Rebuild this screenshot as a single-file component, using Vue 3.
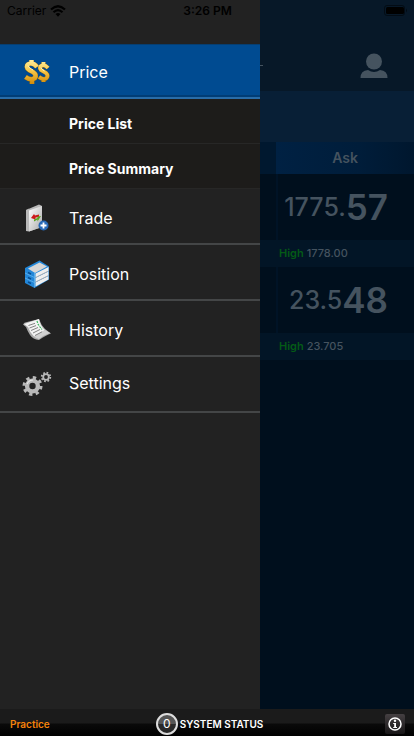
<template>
  <div class="app">
    <!-- status bar lies over both the menu and the page -->
    <header class="status-bar">
      <div class="status-left">
        <span>Carrier</span>
        <svg class="wifi" width="16" height="12" viewBox="0 0 16 12">
          <path d="M1 4.5Q8-2 15 4.5" fill="none" stroke="#000" stroke-width="2.2" />
          <path d="M3.5 7.3Q8 3 12.500 7.300" fill="none" stroke="#000" stroke-width="2.2" />
          <path d="M5.500 9Q8 7 10.500 9L8 11.700Z" fill="#000" />
        </svg>
      </div>
      <span class="clock">3:26 PM</span>
      <div class="status-right">
        <svg width="24" height="11" viewBox="0 0 24 11">
          <rect x="0.500" y="0.500" width="20" height="10" rx="2.500" fill="none" stroke="#030c15" />
          <rect x="2" y="2" width="18" height="7" rx="1.500" fill="#000" />
          <path d="M22 3.500Q24 5.500 22 7.500Z" fill="#030c15" />
        </svg>
      </div>
    </header>

    <div class="body">
      <nav class="menu">
        <button class="menu-item active" type="button">
          <svg class="icon" width="30" height="30" viewBox="0 0 30 30">
            <defs>
              <linearGradient id="gold" gradientUnits="userSpaceOnUse" x1="0" y1="3" x2="0" y2="27">
                <stop offset="0" stop-color="#fff0a0" />
                <stop offset="0.450" stop-color="#f6c84a" />
                <stop offset="1" stop-color="#d08a08" />
              </linearGradient>
            </defs>
            <g fill="none" stroke-linejoin="round">
              <path d="M9.500 3V6M15 10Q12 6 8 6.500Q3.500 7.500 5.500 11.500Q7 13.500 11 15Q15 17.500 13 21Q9 24 3.500 20M10 21.500V27" stroke="#a06a0a" stroke-width="4.800" />
              <path d="M21.500 5V8M26 11Q23 7.500 20 8.500Q16.500 10 19 13L24 16Q27 19 24 21.500Q21 23 17 20M21.500 22V25" stroke="#a06a0a" stroke-width="4.200" />
              <path d="M9.500 3V6M15 10Q12 6 8 6.500Q3.500 7.500 5.500 11.500Q7 13.500 11 15Q15 17.500 13 21Q9 24 3.500 20M10 21.500V27" stroke="url(#gold)" stroke-width="4.200" />
              <path d="M21.500 5V8M26 11Q23 7.500 20 8.500Q16.500 10 19 13L24 16Q27 19 24 21.500Q21 23 17 20M21.500 22V25" stroke="url(#gold)" stroke-width="3.600" />
              <path d="M6 8.500Q7 11 11 13M19 10.500Q19 12 22.500 14" stroke="#fff4b8" stroke-width="1" />
            </g>
          </svg>
          <span>Price</span>
        </button>

        <div class="submenu">
          <button v-for="name in subItems" :key="name" class="sub-item" type="button">{{ name }}</button>
        </div>

        <button v-for="item in items" :key="item" class="menu-item" :class="item.toLowerCase()" type="button">
          <svg v-if="item === 'Trade'" class="icon" width="30" height="30" viewBox="0 0 30 30">
            <defs>
              <linearGradient id="door" x1="0" y1="0" x2="1" y2="1">
                <stop offset="0" stop-color="#fff" />
                <stop offset="1" stop-color="#aaa" />
              </linearGradient>
            </defs>
            <path d="M4 7L7 5.500V26.500L4 28Z" fill="#8d8d8d" />
            <path d="M4 7L17 1.500L20 3V24L7 28.500L4 28Z" fill="#b9b9b9" />
            <path d="M7 7.500L20 3V24L7 28.500Z" fill="url(#door)" />
            <path d="M9 15L12 11L13 12.500L17 11.500V14L13.500 14.500L13.500 16.500Z" fill="#cd1818" />
            <path d="M19 13L15.500 18.500V16.500L12 18.500V16.500L15.500 15V13.500Z" fill="#58a51e" />
            <circle cx="21.500" cy="22.500" r="5" fill="#2869b6" />
            <path d="M18.500 22.500H24.500M21.500 19.500V25.500" stroke="#fff" stroke-width="1.800" />
          </svg>
          <svg v-else-if="item === 'Position'" class="icon" width="30" height="30" viewBox="0 0 30 30">
            <path d="M3 9L17.500 1.500L27 7.500V20.500L12.500 29L3 24Z" fill="#2387d8" />
            <path d="M6 9.500L17.500 3.500L25 7.500L13 14Z" fill="#d7d7d7" />
            <path d="M13.500 14.500L26.500 8V12L13.500 18.500ZM13.500 19L26.500 12.500V16.500L13.500 23ZM13.500 23.500L26.500 17V20.500L13.500 27.500Z" fill="#efefef" />
            <path d="M13.500 18.500L26.500 12M13.500 23L26.500 16.500" stroke="#a8adb2" stroke-width="0.900" />
            <path d="M3 14L12.500 18.500M3 19L12.500 23.500M12.500 13.500V28.500" fill="none" stroke="#65b6ef" stroke-width="0.800" />
            <path d="M6 13.500L9 15M6 18.500L9 20M6 23L9 24.500" stroke="#084d91" stroke-width="1.400" />
          </svg>
          <svg v-else-if="item === 'History'" class="icon" width="30" height="30" viewBox="0 0 30 30">
            <path d="M1 9.500Q2 7 5 7L17 4Q19 10 23 14L29 18.500Q24 20 17 25Q11 24.500 8 20Q5 15 4 12Z" fill="#aaa" />
            <path d="M2 9L17 4Q18 11 23 15L12 21.500Q8 18 6 12Z" fill="#f3f3f3" />
            <path d="M12 21.500L23 15L28 18Q22 20 17 24Q14 23 12 21.500Z" fill="#d2d2d2" />
            <path d="M6.500 10.500L13 8.300M7.500 13L14 10.600M9 15.500L16 12.500M11 18L18 14.500M13 20.500L20 16.800" stroke="#777" stroke-width="0.900" />
            <path d="M15 6L16 9L18 12L20 14.500" fill="none" stroke="#34b85a" stroke-width="1.200" stroke-dasharray="2 1" />
          </svg>
          <svg v-else class="icon" width="30" height="30" viewBox="0 0 30 30">
            <g fill="none" stroke="#b9b9b9">
              <circle cx="10.500" cy="18" r="5.400" stroke-width="4.400" />
              <circle cx="10.500" cy="18" r="8.500" stroke-width="3" stroke-dasharray="3.340" />
              <circle cx="24" cy="9" r="2.800" stroke-width="1.800" />
              <circle cx="24" cy="9" r="4.300" stroke-width="1.800" stroke-dasharray="1.690" />
            </g>
            <path d="M5 16Q7 12 11 12" fill="none" stroke="#e6e6e6" stroke-width="1.200" />
          </svg>
          <span>{{ item }}</span>
        </button>
      </nav>

      <main class="page">
        <div class="page-head">
          <span class="title-end"></span>
          <button class="user" type="button" aria-label="Account">
            <svg width="28" height="26" viewBox="0 0 28 26">
              <circle cx="14" cy="8.500" r="8" fill="#45535f" />
              <path d="M0.500 25Q0.500 17.500 8 17Q14 21 20 17Q27.500 17.500 27.500 25Z" fill="#45535f" />
            </svg>
          </button>
        </div>
        <div class="band"></div>
        <div class="column-head"><span>Ask</span></div>
        <section v-for="quote in quotes" :key="quote.high" class="quote">
          <div class="price">
            <div class="value"><span class="small">{{ quote.small }}</span><span class="big">{{ quote.big }}</span></div>
          </div>
          <div class="high"><span>High</span> {{ quote.high }}</div>
        </section>
      </main>
    </div>

    <footer class="footer">
      <span class="mode">Practice</span>
      <div class="system">
        <span class="count">0</span>
        <span>SYSTEM STATUS</span>
      </div>
      <button class="info" type="button" aria-label="Information">
        <svg width="16" height="16" viewBox="0 0 16 16">
          <circle cx="8" cy="8" r="6" fill="none" stroke="#fff" stroke-width="1.500" />
          <circle cx="8" cy="4.700" r="1.200" fill="#fff" />
          <path d="M6.200 7H9V11H10V12H6.200V11H7.200V8H6.200Z" fill="#fff" />
        </svg>
      </button>
    </footer>
  </div>
</template>

<script setup>
const subItems = ['Price List', 'Price Summary'];
const items = ['Trade', 'Position', 'History', 'Settings'];
const quotes = [
  { small: '1775.', big: '57', high: '1778.00' },
  { small: '23.5', big: '48', high: '23.705' },
];
</script>

<style>
body {
  margin: 0;
  background: #000f1d;
}
</style>

<style scoped>
.app {
  position: relative;
  display: flex;
  flex-direction: column;
  min-height: 100vh;
  font-family: Inter, "Liberation Sans", sans-serif;
}

button {
  padding: 0;
  border: none;
  background: none;
  font-family: inherit;
  cursor: pointer;
}

/* status bar */
.status-bar {
  position: absolute;
  top: 0;
  left: 0;
  right: 0;
  display: grid;
  grid-template-columns: 1fr auto 1fr;
  align-items: center;
  height: 21px;
  padding: 0 6px 0 7px;
  font-size: 12px;
  color: #000;
}

.status-left {
  display: flex;
  align-items: center;
  gap: 4px;
}

.clock {
  font-weight: 600;
}

.status-right {
  display: flex;
  justify-content: flex-end;
}

.body {
  display: flex;
  flex: 1;
}

/* side menu */
.menu {
  box-sizing: border-box;
  flex: none;
  width: 260px;
  padding-top: 44px;
  background: #222;
}

.menu-item {
  display: flex;
  align-items: center;
  box-sizing: border-box;
  width: 100%;
  height: 56px;
  padding: 4px 0 0 22px;
  gap: 17px;
  border-bottom: 2px solid #444647;
  font-size: 16px;
  color: #fff;
}

.menu-item.active {
  height: 55px;
  padding-top: 2px;
  background: #004b91;
  border-top: 1px solid #073e70;
  border-bottom: 2px solid #286ca8;
  box-shadow: inset 0 -2px #003d76;
}

.menu-item.settings {
  padding-top: 0;
  padding-bottom: 2px;
}

.submenu {
  background: #1d1c1a;
}

.sub-item {
  display: block;
  box-sizing: border-box;
  width: 100%;
  height: 45px;
  padding: 4px 0 0 69px;
  border-bottom: 1px solid #272726;
  font-size: 14px;
  font-weight: 700;
  text-align: left;
  color: #fff;
}

/* dimmed price page */
.page {
  flex: 1;
  min-width: 0;
  background: #000f1d;
}

.page-head {
  display: flex;
  align-items: center;
  justify-content: space-between;
  box-sizing: border-box;
  height: 91px;
  padding: 40px 26px 0 0;
  background: #071828;
}

.title-end {
  width: 3px;
  height: 1px;
  background: #45535f;
}

.user svg {
  display: block;
}

.band {
  height: 51px;
  background: #081f36;
}

.column-head {
  height: 32px;
  padding-left: 16px;
  background: #00182f;
  font-size: 14px;
  font-weight: 600;
  line-height: 32px;
  text-align: center;
  color: #45535f;
}

.column-head span {
  display: block;
  background: linear-gradient(90deg, #002143, #001d3a 60%, #00172e);
}

.price {
  display: flex;
  height: 66px;
  padding-left: 16px;
}

.value {
  display: flex;
  align-items: center;
  justify-content: flex-end;
  flex: 1;
  padding-right: 26px;
  border-left: 2px solid #001326;
  line-height: 66px;
  color: #45535f;
}

.small {
  font-size: 25px;
  font-weight: 500;
}

.big {
  font-size: 35px;
  font-weight: 600;
}

.high {
  height: 27px;
  padding-left: 19px;
  background: #021526;
  font-size: 11px;
  font-weight: 500;
  line-height: 27px;
  color: #45535f;
}

.high span {
  font-weight: 600;
  color: #045a16;
}

/* bottom bar */
.footer {
  display: grid;
  grid-template-columns: 1fr auto 1fr;
  align-items: center;
  box-sizing: border-box;
  height: 27px;
  padding: 2px 9px 0 10px;
  background: linear-gradient(#1b1b1b 14px, #0a0a0a 15px, #000);
  font-size: 10px;
  font-weight: 600;
  color: #fff;
}

.mode {
  color: #f5820b;
}

.system {
  display: flex;
  align-items: center;
  gap: 2px;
  padding-left: 4px;
}

.count {
  box-sizing: border-box;
  width: 22px;
  height: 22px;
  border: 2px solid #ddd;
  border-radius: 50%;
  background: linear-gradient(#555 50%, #292929 50%);
  font-size: 12px;
  font-weight: 400;
  line-height: 18px;
  text-align: center;
}

.info {
  display: flex;
  align-items: center;
  justify-content: center;
  justify-self: end;
  width: 20px;
  height: 20px;
  border-radius: 2px;
  background: linear-gradient(#454042, #171516);
}
</style>
